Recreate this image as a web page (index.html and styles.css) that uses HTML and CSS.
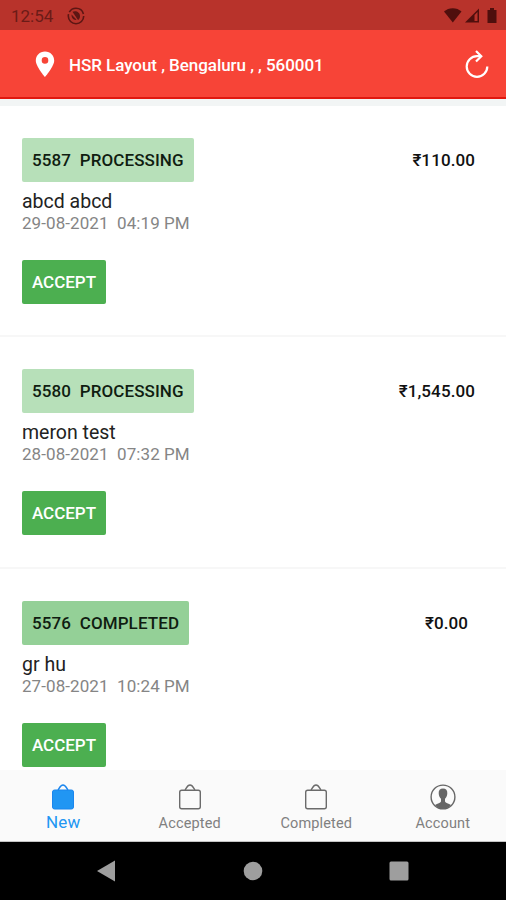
FILE: index.html
```html
<!DOCTYPE html>
<html lang="en">
<head>
    <meta charset="UTF-8">
    <meta name="viewport" content="width=device-width, initial-scale=1.0">
    <title>Orders</title>
    <link rel="stylesheet" href="styles.css">
</head>
<body>
    <div class="phone">
        <div class="status-bar">
            <span class="clock">12:54</span>
            <svg class="status-app" width="18" height="18" viewBox="0 0 18 18">
                <circle cx="9" cy="9" r="7.7" fill="none" stroke="#5c1613" stroke-width="1.6" stroke-dasharray="26 2 18 2.4"/>
                <path d="M5.500 4.800C9 3.200 13.200 5.500 13 9.200c0 1.800-.8 3.200-2 3.800z" fill="#5c1613"/>
                <path d="M4.600 7.500l5 5.300c-3 .6-5.500-2-5-5.300z" fill="#5c1613"/>
            </svg>
            <svg class="status-icons" width="54" height="17" viewBox="0 0 54 17">
                <path d="M0 4.500C4.500 0 13 0 17.500 4.500L8.800 15.500z" fill="#4f0f0d"/>
                <path d="M21 15.500L35 1.500v14z" fill="#4f0f0d"/>
                <path d="M30.500 8L33.500 5v9h-3z" fill="#b8332b"/>
                <path d="M43.500 3h2.500V1h4v2h2.500v13h-9z" fill="#4f0f0d"/>
            </svg>
        </div>

        <header class="header">
            <svg class="pin" width="20" height="27" viewBox="0 0 20 27">
                <path d="M10 .5C4.600.5.800 4.500.800 9.500.800 15.500 10 26 10 26s9.200-10.500 9.200-16.500C19.200 4.500 15.400.5 10 .5zm0 12.200a3.300 3.300 0 1 1 0-6.600 3.300 3.300 0 0 1 0 6.600z" fill="#fff"/>
            </svg>
            <span class="address">HSR Layout , Bengaluru , , 560001</span>
            <svg class="refresh" width="26" height="30" viewBox="0 0 26 30" fill="none" stroke="#fff" stroke-width="2.200">
                <path d="M17 7.200H13A10.300 10.300 0 1 0 23.300 17.500"/>
                <path d="M12 2l5.300 5.200L12 12.500"/>
            </svg>
        </header>

        <main class="orders">
            <section class="order">
                <div class="order-top">
                    <span class="chip processing">5587&nbsp; PROCESSING</span>
                    <span class="price">₹110.00</span>
                </div>
                <div class="name">abcd abcd</div>
                <div class="date">29-08-2021&nbsp; 04:19 PM</div>
                <button class="accept">ACCEPT</button>
            </section>
            <section class="order">
                <div class="order-top">
                    <span class="chip processing">5580&nbsp; PROCESSING</span>
                    <span class="price">₹1,545.00</span>
                </div>
                <div class="name">meron test</div>
                <div class="date">28-08-2021&nbsp; 07:32 PM</div>
                <button class="accept">ACCEPT</button>
            </section>
            <section class="order">
                <div class="order-top">
                    <span class="chip completed">5576&nbsp; COMPLETED</span>
                    <span class="price price-short">₹0.00</span>
                </div>
                <div class="name">gr hu</div>
                <div class="date">27-08-2021&nbsp; 10:24 PM</div>
                <button class="accept">ACCEPT</button>
            </section>
        </main>

        <nav class="tabs">
            <a class="tab active">
                <svg width="26" height="28" viewBox="0 0 26 28">
                    <rect x="2.500" y="7" width="21" height="19" rx="2" fill="#2196f3" stroke="#1b86ee"/>
                    <path d="M8 7c1.500-1.500 2-5 5-5s3.500 3.500 5 5" fill="none" stroke="#1b86ee" stroke-width="1.500"/>
                </svg>
                <span>New</span>
            </a>
            <a class="tab">
                <svg width="26" height="28" viewBox="0 0 26 28" fill="none" stroke="#6b6b6b" stroke-width="1.400">
                    <rect x="2.700" y="7.200" width="20.600" height="18.600" rx="2"/>
                    <path d="M8 7c1.500-1.500 2-5 5-5s3.500 3.500 5 5"/>
                </svg>
                <span>Accepted</span>
            </a>
            <a class="tab">
                <svg width="26" height="28" viewBox="0 0 26 28" fill="none" stroke="#6b6b6b" stroke-width="1.400">
                    <rect x="2.700" y="7.200" width="20.600" height="18.600" rx="2"/>
                    <path d="M8 7c1.500-1.500 2-5 5-5s3.500 3.500 5 5"/>
                </svg>
                <span>Completed</span>
            </a>
            <a class="tab">
                <svg width="26" height="28" viewBox="0 0 26 28">
                    <circle cx="13" cy="14" r="11.900" fill="#fafafa" stroke="#666" stroke-width="1.400"/>
                    <path d="M13 5.500c-3 0-4.500 2-4.300 4.800.1 2.500 1 4.300 2.300 5.500v2.700c-.5 1.500-3.500 2-6 3.500 2 2.500 5 4 8 4s6-1.500 8-4c-2.500-1.500-5.500-2-6-3.500v-2.700c1.300-1.200 2.200-3 2.300-5.500.2-2.800-1.300-4.800-4.300-4.800z" fill="#666"/>
                </svg>
                <span>Account</span>
            </a>
        </nav>

        <div class="nav-bar">
            <svg width="20" height="22" viewBox="0 0 20 22"><path d="M1 11L19 .5v21z" fill="#9e9e9e"/></svg>
            <svg width="20" height="20" viewBox="0 0 20 20"><circle cx="10" cy="10" r="9.300" fill="#9e9e9e"/></svg>
            <svg width="20" height="20" viewBox="0 0 20 20"><rect x=".5" y=".5" width="19" height="19" rx="1.500" fill="#9e9e9e"/></svg>
        </div>
    </div>
</body>
</html>
```

FILE: styles.css
```css
body {
    margin: 0;
    background-color: #fff;
    font-family: Roboto, sans-serif;
}

.phone {
    display: flex;
    flex-direction: column;
    width: 506px;
    height: 900px;
    overflow: hidden;
}

/* top bars */
.status-bar {
    display: flex;
    align-items: center;
    flex-shrink: 0;
    box-sizing: border-box;
    height: 30px;
    padding: 1px 8px 0 11px;
    background-color: #b8332b;
}

.clock {
    width: 56px;
    color: #6b1b17;
    font-size: 17px;
}

.status-icons {
    margin-left: auto;
}

.header {
    display: flex;
    align-items: center;
    flex-shrink: 0;
    box-sizing: border-box;
    height: 69px;
    padding: 1px 16px 0 35px;
    background-color: #f74437;
    border-bottom: 2px solid #e0180f;
}

.address {
    margin-left: 14px;
    padding-top: 1px;
    color: #fff;
    font-size: 17px;
    font-weight: 500;
    letter-spacing: -0.05px;
    white-space: nowrap;
}

.refresh {
    margin-left: auto;
}

/* order list */
.orders {
    flex: 1;
    min-height: 0;
    overflow: hidden;
    border-top: 7px solid #f2f5f5;
}

.order {
    box-sizing: border-box;
    height: 231.400px;
    padding: 32px 31px 0 22px;
    border-bottom: 2px solid #f7f7f7;
}

.order-top {
    display: flex;
    align-items: center;
    justify-content: space-between;
}

.chip {
    height: 44px;
    padding: 0 10px;
    border-radius: 2px;
    color: #101d11;
    font-size: 17px;
    font-weight: 500;
    line-height: 44px;
    letter-spacing: 0.1px;
}

.processing {
    background-color: #b7e0b9;
}

.completed {
    background-color: #94d097;
}

.price {
    color: #111;
    font-size: 17px;
    font-weight: 500;
    letter-spacing: 0.1px;
}

.price-short {
    margin-right: 7px;
}

.name {
    margin-top: 8px;
    color: #222;
    font-size: 19.500px;
    line-height: 23px;
}

.date {
    color: #858585;
    font-size: 17px;
    line-height: 21px;
    letter-spacing: 0.07px;
}

.accept {
    display: block;
    width: 84px;
    height: 44px;
    margin-top: 26px;
    padding: 0;
    border: none;
    border-radius: 2px;
    background-color: #4caf50;
    color: #fff;
    font-family: Roboto, sans-serif;
    font-size: 17px;
    font-weight: 500;
}

/* bottom tabs */
.tabs {
    display: flex;
    flex-shrink: 0;
    box-sizing: border-box;
    height: 72px;
    background-color: #fafafa;
    border-bottom: 1px solid #c4c4c4;
}

.tab {
    display: flex;
    flex: 1;
    flex-direction: column;
    align-items: center;
    padding-top: 13px;
    color: #808080;
    font-size: 14.500px;
    line-height: 26px;
    letter-spacing: 0.15px;
}

.active {
    color: #2196f3;
    font-size: 17px;
    line-height: 22px;
}

.nav-bar {
    display: flex;
    align-items: center;
    justify-content: space-between;
    flex-shrink: 0;
    box-sizing: border-box;
    height: 58px;
    padding: 0 97px 0 96px;
    background-color: #000;
}
```
